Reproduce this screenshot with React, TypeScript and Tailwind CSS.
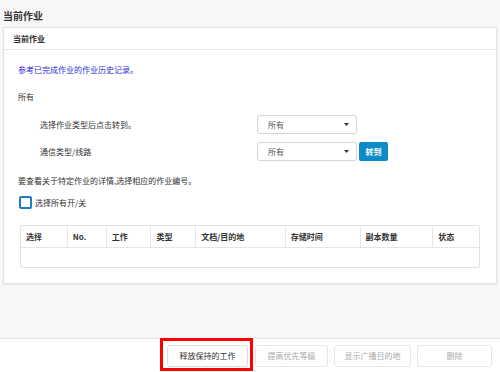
import React from "react";

const font = { fontFamily: '"Noto Sans CJK SC", "Liberation Sans", sans-serif' };

function Caret() {
  return (
    <svg width="5" height="3" viewBox="0 0 5 3" className="block">
      <path d="M0 0 L5 0 L2.5 3 Z" fill="#333" />
    </svg>
  );
}

function Select() {
  return (
    <div className="w-[100px] h-[19px] border border-[#d4d4d4] rounded-[3px] bg-white flex items-center justify-between pl-[10px] pr-[7px] text-[8px] text-[#555]">
      <span>所有</span>
      <Caret />
    </div>
  );
}

const cols: [string, number][] = [
  ["选择", 47],
  ["No.", 39],
  ["工作", 45],
  ["类型", 45],
  ["文档/目的地", 90],
  ["存储时间", 75],
  ["副本数量", 73],
  ["状态", 46],
];

export default function App() {
  return (
    <div className="relative w-[500px] h-[372px] bg-[#f7f7f7] flex flex-col text-[#333]" style={font}>
      <div className="h-[27px] pl-[3px] pt-[9px] text-[10px] font-bold leading-[14px] text-[#333]">当前作业</div>
      <div className="mx-[3px] bg-white border border-[#e4e4e4] shadow-[0_1px_1px_rgba(0,0,0,0.05)] h-[257px] flex flex-col">
        <div className="h-[22px] border-b border-[#e6e6e6] pl-[9px] flex items-center text-[8px] font-bold">当前作业</div>
        <div className="pl-[14px] flex flex-col text-[8px]">
          <div className="h-[10px]" />
          <div className="h-[20px] flex items-center text-[#2b2bd6]">参考已完成作业的作业历史记录。</div>
          <div className="h-[7px]" />
          <div className="h-[20px] flex items-center">所有</div>
          <div className="h-[8px]" />
          <div className="h-[19px] flex items-center">
            <div className="w-[239px] pl-[22px]">选择作业类型后点击转到。</div>
            <Select />
          </div>
          <div className="h-[8px]" />
          <div className="h-[19px] flex items-center">
            <div className="w-[239px] pl-[22px]">通信类型/线路</div>
            <Select />
            <div className="ml-[2px] w-[29px] h-[19px] rounded-[2px] bg-[#0b8bc8] text-white flex items-center justify-center font-bold">转到</div>
          </div>
          <div className="h-[10px]" />
          <div className="h-[20px] flex items-center">要查看关于特定作业的详情,选择相应的作业编号。</div>
          <div className="h-[5px]" />
          <div className="h-[13px] flex items-center">
            <div className="ml-[1px] w-[13px] h-[13px] border-2 border-[#1b7dc2] rounded-[2px]" />
            <span className="ml-[3px]">选择所有开/关</span>
          </div>
          <div className="h-[16px]" />
          <div className="ml-[2px] w-[460px] h-[43px] border border-[#e2e2e2] rounded-[2px] flex flex-col">
            <div className="h-[22px] flex border-b border-[#e6e6e6]">
              {cols.map(([t, w], i) => (
                <div
                  key={t}
                  className={`h-full flex items-center pl-[5px] font-bold ${i < cols.length - 1 ? "border-r border-[#e6e6e6]" : ""}`}
                  style={{ width: w }}
                >
                  {t}
                </div>
              ))}
            </div>
            <div className="flex-1" />
          </div>
        </div>
      </div>
      <div className="flex-1" />
      <div className="h-[34px] bg-white border-t border-[#e2e2e2] flex items-center justify-end gap-[5px] pr-[8px] text-[8px]">
        <div className="w-[81px] h-[22px] border border-[#dcdcdc] rounded-[3px] bg-white flex items-center justify-center text-[#333] mr-[1px]">释放保持的工作</div>
        <div className="w-[73px] h-[22px] border border-[#e6e6e6] rounded-[3px] bg-white flex items-center justify-center text-[#aaa] ml-[1px]">提高优先等级</div>
        <div className="w-[77px] h-[22px] border border-[#e6e6e6] rounded-[3px] bg-white flex items-center justify-center text-[#aaa] ml-[1px]">显示广播目的地</div>
        <div className="w-[75px] h-[22px] border border-[#e6e6e6] rounded-[3px] bg-white flex items-center justify-center text-[#aaa] ml-[1px]">删除</div>
      </div>
      <div className="absolute left-[160px] top-[338px] w-[93px] h-[33px] border-[3px] border-[#ff0000]" />
    </div>
  );
}
